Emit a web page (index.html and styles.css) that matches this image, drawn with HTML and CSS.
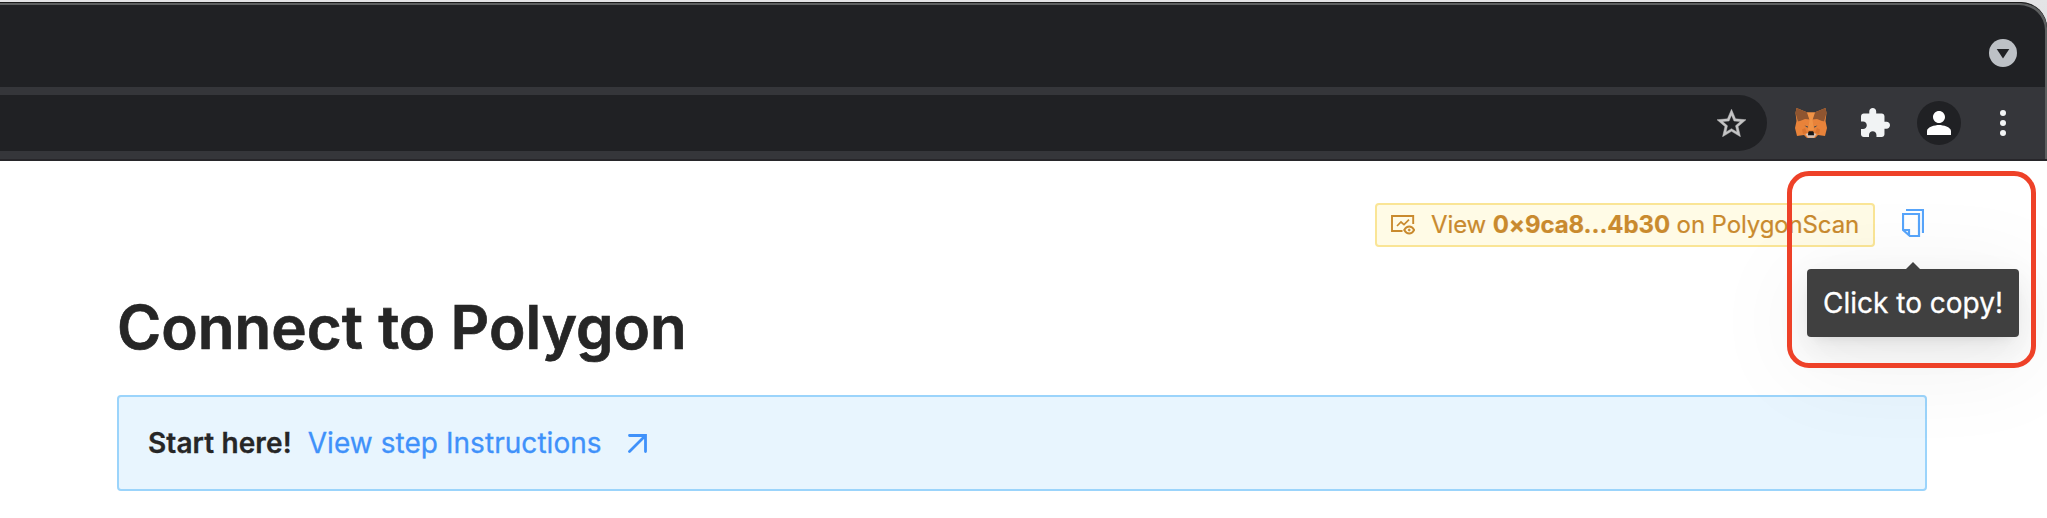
FILE: index.html
```html
<!DOCTYPE html>
<html lang="en">
<head>
<meta charset="utf-8">
<title>Connect to Polygon</title>
<link rel="stylesheet" href="styles.css">
</head>
<body>
<header class="browser">
  <div class="tabstrip">
    <svg class="tab-menu" viewBox="0 0 28 28"><circle cx="14" cy="14" r="14" fill="#bdc1c6"/><path d="M7.700 10h12.600L14 19.500z" fill="#202124"/></svg>
  </div>
  <div class="toolbar">
    <div class="omnibox">
      <svg class="star" viewBox="2 2 20 19"><path fill="#c4c4c5" stroke="#c4c4c5" stroke-width=".3" d="M22 9.240l-7.190-.620L12 2 9.190 8.630 2 9.240l5.460 4.730L5.820 21 12 17.270 18.180 21l-1.630-7.030L22 9.240zM12 15.400l-3.760 2.270 1-4.280-3.320-2.880 4.380-.380L12 6.100l1.710 4.040 4.380.380-3.320 2.880 1 4.280L12 15.400z"/></svg>
    </div>
    <svg class="fox" viewBox="0 0 32 30">
      <path fill="#e8833a" d="M1.500 0 12.500 4.500h7L30.500 0l1 5-1 8L32 20l-2 8-7-1-3 3h-8l-3-3-7 1-2-8 1.500-7L.5 5z"/>
      <path fill="#8f5530" d="M1.500 0 12.500 4.500 15 12 3 13.500.5 5zM30.500 0 19.500 4.500 17 12l12 1.500L31.500 5z"/>
      <path fill="#e8833a" d="M2.500 14 10 11l5 .500v5zM29.500 14 22 11l-5 .500v5z"/>
      <path fill="#f09346" d="M12 4.500h8L17.500 12 19 22h-6l1.500-10z"/>
      <path fill="#da7430" d="m7 21.500 3-1.500 2 5-4 1zM25 21.500l-3-1.500-2 5 4 1z"/>
      <path fill="#334450" d="m9.500 17.500 3.500 1-.5 1.300zM22.500 17.500l-3.500 1 .5 1.300z"/>
      <path fill="#d7c1b3" d="m10.500 26 3-1h5l3 1-2.500 3.700h-6z"/>
      <path fill="#161616" d="m13.300 24 .7-.7h4l.7.700.3 3.200h-6z"/>
    </svg>
    <svg class="puzzle" viewBox="2 1 21 21"><path fill="#f1f3f4" d="M20.500 11H19V7c0-1.100-.9-2-2-2h-4V3.500C13 2.120 11.880 1 10.500 1S8 2.120 8 3.500V5H4c-1.100 0-1.990.9-1.990 2v3.800H3.500c1.490 0 2.700 1.210 2.700 2.700s-1.210 2.700-2.700 2.700H2V20c0 1.100.9 2 2 2h3.800v-1.500c0-1.490 1.210-2.700 2.700-2.700 1.490 0 2.700 1.210 2.700 2.700V22H17c1.100 0 2-.9 2-2v-4h1.500c1.380 0 2.500-1.120 2.500-2.500S21.880 11 20.500 11z"/></svg>
    <div class="avatar"><svg viewBox="4 4 16 16"><path fill="#fff" d="M12 12c2.210 0 4-1.790 4-4s-1.790-4-4-4-4 1.790-4 4 1.790 4 4 4zm0 1.400c-2.670 0-8 1.340-8 4V20h16v-2.600c0-2.660-5.330-4-8-4z"/></svg></div>
    <svg class="dots" viewBox="0 0 6 26"><g fill="#f1f3f4"><circle cx="3" cy="3" r="3"/><circle cx="3" cy="13" r="3"/><circle cx="3" cy="23" r="3"/></g></svg>
  </div>
</header>
<main class="page">
  <div class="account">
    <a class="tag">
      <svg class="fund" viewBox="0 0 24 20" fill="none" stroke="#c98a2e" stroke-width="1.900"><path d="M22.200 9V1H1v15h10.500"/><path d="m6 11 4-4 3 2.700 5-5" stroke-width="1.700"/><path d="M13.200 15c2.600-4.600 7.500-4.600 10 0-2.500 4.600-7.400 4.600-10 0z"/><circle cx="18.200" cy="15" r="1" fill="#c98a2e" stroke-width=".8"/></svg>
      <span class="tag-text">View <b>0×9ca8...4b30</b> on PolygonScan</span>
    </a>
    <div class="copy">
      <svg class="copy-icon" viewBox="0 0 22 28" fill="none" stroke="#57a5fb" stroke-width="2.200"><path d="M4 1h17v23"/><path d="M2 5h15v22H8l-7-6V5zM1 21h6v6"/></svg>
      <div class="tooltip">Click to copy!</div>
    </div>
    <div class="highlight"></div>
  </div>
  <h1 class="title">Connect to Polygon</h1>
  <div class="alert">
    <b>Start here!</b>
    <a class="link">View step Instructions</a>
    <svg class="arrow" viewBox="0 0 19 19" fill="none" stroke="#3f91fa" stroke-width="2.800" stroke-linecap="round"><path d="M1.500 1.500h16v16M17 2 1.500 17.500"/></svg>
  </div>
</main>
</body>
</html>
```
FILE: styles.css
```css
* { box-sizing: border-box; }
body {
  margin: 0;
  height: 518px;
  overflow: hidden;
  background: #fff;
  color: #262626;
  font-family: Inter, "Liberation Sans", sans-serif;
}
svg { display: block; flex: none; }
.browser {
  height: 161px;
  padding-top: 2px;
  background: linear-gradient(#e4e4e6, #dcdcde);
}
.tabstrip {
  height: 85px;
  padding: 34px 30px 0 0;
  display: flex;
  justify-content: flex-end;
  background: #202124;
  border-top: 1px solid #1a1a1a;
  border-radius: 0 26px 0 0;
  box-shadow: inset -2px 2px 0 #5d5f60;
}
.tab-menu { width: 28px; height: 28px; margin-top: 2px; }
.toolbar {
  height: 74px;
  padding-right: 41px;
  display: flex;
  align-items: center;
  background: #35363a;
  border-bottom: 2px solid #27262a;
  box-shadow: inset -2px 0 0 #5d5f60;
}
.omnibox {
  width: 1767px;
  height: 56px;
  padding-right: 21px;
  display: flex;
  align-items: center;
  justify-content: flex-end;
  background: #202124;
  border-radius: 0 28px 28px 0;
}
.star { width: 29px; height: 28px; }
.fox { width: 32px; height: 30px; margin-left: 28px; }
.puzzle { width: 29px; height: 29px; margin: -2px 0 0 34px; }
.avatar {
  width: 44px;
  height: 44px;
  margin-left: 27px;
  display: grid;
  place-items: center;
  border-radius: 50%;
  background: #202124;
}
.avatar svg { width: 24px; height: 24px; }
.dots { width: 6px; height: 26px; margin-left: 39px; }

.page { padding: 42px 120px 0 117px; }
.account {
  position: relative;
  height: 44px;
  display: flex;
  justify-content: flex-end;
  align-items: center;
}
.tag {
  width: 500px;
  height: 44px;
  padding-left: 14px;
  display: flex;
  align-items: center;
  background: #fffbe6;
  border: 2px solid #fae596;
  border-radius: 4px;
  color: #c98a2e;
  font-size: 24px;
  letter-spacing: -0.12px;
  white-space: nowrap;
  -webkit-text-stroke: 0.2px;
}
.fund { width: 24px; height: 20px; margin-right: 16px; }
.tag-text { margin-top: -2px; }
.tag-text b { font-weight: 700; letter-spacing: -0.1px; }
.copy { position: relative; margin: 0 3px 0 27px; }
.copy-icon { width: 22px; height: 28px; margin-top: -4px; }
.tooltip {
  position: absolute;
  top: 56px;
  left: -95px;
  width: 212px;
  height: 68px;
  display: grid;
  place-items: center;
  background: #404040;
  border-radius: 4px;
  color: #fff;
  font-size: 28px;
  white-space: nowrap;
  -webkit-text-stroke: 0.3px;
  box-shadow: 0 6px 12px -8px rgba(0,0,0,.12), 0 12px 32px rgba(0,0,0,.08), 0 18px 96px 16px rgba(0,0,0,.05);
}
.tooltip::before {
  content: "";
  position: absolute;
  top: -7px;
  left: 99px;
  border: 7px solid transparent;
  border-top: 0;
  border-bottom-color: #404040;
}
.highlight {
  position: absolute;
  top: -32px;
  right: -109px;
  width: 249px;
  height: 197px;
  border: 5px solid #ee4128;
  border-radius: 22px;
}
.title {
  margin: 43px 0 0;
  font-size: 60px;
  line-height: 74px;
  font-weight: 600;
  letter-spacing: 0.04px;
  -webkit-text-stroke: 0.7px;
}
.alert {
  height: 96px;
  margin-top: 31px;
  padding-left: 29px;
  display: flex;
  align-items: center;
  background: #e8f5fe;
  border: 2px solid #9bd4fb;
  border-radius: 4px;
  font-size: 28px;
  white-space: nowrap;
}
.alert b { font-weight: 600; -webkit-text-stroke: 0.3px; letter-spacing: 0.1px; }
.link { margin-left: 16px; color: #3f91fa; letter-spacing: 0.05px; -webkit-text-stroke: 0.3px; }
.arrow { width: 19px; height: 19px; margin-left: 26px; }
```
